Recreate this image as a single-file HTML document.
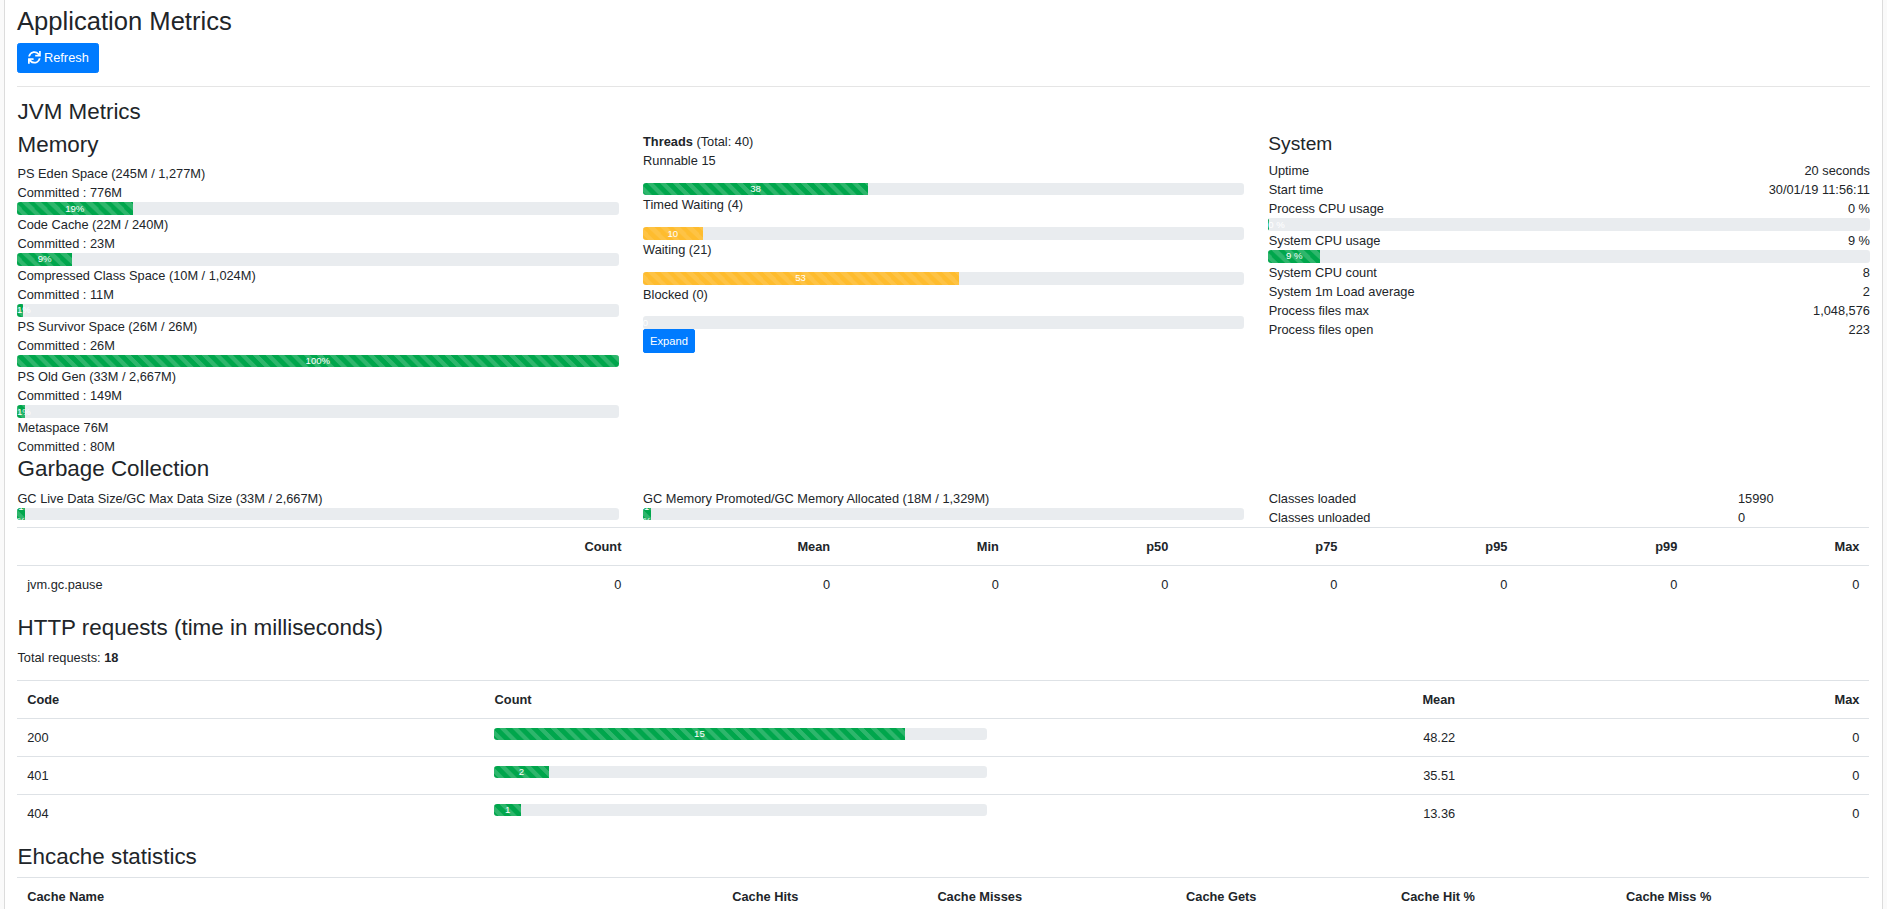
<!DOCTYPE html>
<html>
<head>
<meta charset="utf-8">
<style>
html,body{margin:0;padding:0;}
body{background:#fafafa;width:1887px;height:909px;overflow:hidden;position:relative;
  font-family:"Liberation Sans",sans-serif;color:#212529;}
.card{position:absolute;left:4px;top:-20px;width:1877px;height:1000px;background:#fff;border:1px solid #dcdcdc;}
.z{position:absolute;left:12px;top:24.8px;width:1853px;font-size:12.8px;line-height:19px;}
h2,h3,h4{margin:0 0 6.4px 0;font-weight:500;}
h3{text-indent:0.6px;}
h4,h2{text-indent:0;}
.z{text-indent:0.4px;}
th,td{text-indent:0.6px;}
.tr,.bar,.btn{text-indent:0;}
h2{font-size:25.6px;line-height:30px;}
h3{font-size:22.4px;line-height:26px;}
h4{font-size:19.2px;line-height:23px;}
p{margin:0 0 12.8px 0;}
hr{margin:12.8px 0;border:0;border-top:1px solid rgba(0,0,0,.1);box-sizing:content-box;height:0;}
.btn{display:inline-block;font-weight:400;text-align:center;white-space:nowrap;vertical-align:middle;
  border:0.8px solid #007bff;padding:4.5px 9.6px;font-size:12.8px;line-height:19px;border-radius:2.5px;
  color:#fff;background:#007bff;font-family:inherit;margin:0;}
.btn-sm{padding:3px 6.4px;font-size:11.2px;line-height:16px;border-radius:2px;}
.row{display:flex;flex-wrap:wrap;margin:0 -12px;}
.col4,.col9,.col3,.col8,.col12{padding:0 12px;box-sizing:border-box;}
.col4{flex:0 0 33.333333%;max-width:33.333333%;}
.col9{flex:0 0 75%;max-width:75%;}
.col3{flex:0 0 25%;max-width:25%;}
.col8{flex:0 0 66.666667%;max-width:66.666667%;}
.col12{flex:0 0 100%;max-width:100%;}
.tr{text-align:right;}
.progress{display:flex;height:12.8px;overflow:hidden;font-size:9.6px;line-height:14px;background:#e9ecef;border-radius:3.2px;}
.bar{display:flex;flex-direction:column;justify-content:center;color:#fff;text-align:center;white-space:nowrap;
  background-color:rgb(0,166,76);
  background-image:linear-gradient(45deg,rgba(255,255,255,.18) 25%,transparent 25%,transparent 50%,rgba(255,255,255,.18) 50%,rgba(255,255,255,.18) 75%,transparent 75%,transparent);
  background-size:12.8px 12.8px;background-position:4.8px 0;}
#thr .bar{background-position:3.6px 0;}
#sys .bar{background-position:3.8px 0;}
.warn{background-color:rgb(254,188,46);background-image:linear-gradient(45deg,rgba(255,255,255,.11) 25%,transparent 25%,transparent 50%,rgba(255,255,255,.11) 50%,rgba(255,255,255,.11) 75%,transparent 75%,transparent);}
#thr .warn{background-position:4.9px 0;}
.wrap{white-space:normal;}
td .progress{height:12px;}
.cat td{white-space:nowrap;overflow:hidden;}
table{width:1852px;border-collapse:collapse;margin-bottom:12.8px;table-layout:fixed;}
th,td{padding:9px 9.6px;vertical-align:top;border-top:1px solid #dee2e6;}
th{font-weight:700;text-align:left;}
thead th{vertical-align:bottom;border-bottom:1px solid #dee2e6;}
.fa{display:inline-block;width:12.8px;height:12.8px;vertical-align:-1.6px;overflow:visible;}
</style>
</head>
<body>
<div class="card">
<div class="z">
  <h2>Application Metrics</h2>
  <p style="padding-top:0.6px;text-indent:0"><button class="btn"><svg class="fa" viewBox="0 0 512 512"><path fill="#fff" d="M440.65 12.57l4 82.77A247.16 247.16 0 0 0 255.83 8C134.73 8 33.91 94.92 12.29 209.82A12 12 0 0 0 24.09 224h49.05a12 12 0 0 0 11.67-9.26 175.91 175.910 0 0 1 317-56.94l-101.46-4.86a12 12 0 0 0-12.57 12v47.41a12 12 0 0 0 12 12H500a12 12 0 0 0 12-12V12a12 12 0 0 0-12-12h-47.37a12 12 0 0 0-11.98 12.57zM255.83 432a175.61 175.61 0 0 1-146-77.8l101.8 4.87a12 12 0 0 0 12.57-12v-47.4a12 12 0 0 0-12-12H12a12 12 0 0 0-12 12V500a12 12 0 0 0 12 12h47.35a12 12 0 0 0 12-12.6l-4.15-82.57A247.17 247.17 0 0 0 255.83 504c121.11 0 221.93-86.92 243.55-201.82a12 12 0 0 0-11.8-14.18h-49.05a12 12 0 0 0-11.67 9.26A175.86 175.86 0 0 1 255.83 432z"/></svg>&nbsp;<span>Refresh</span></button></p>
  <hr>
  <h3>JVM Metrics</h3>
  <div class="row">
    <div class="col4" id="mem">
      <h3>Memory</h3>
      <div><span>PS Eden Space (245M / 1,277M)</span><div>Committed : 776M</div><div class="progress"><div class="bar" style="width:19.2%"><span>19%</span></div></div></div>
      <div><span>Code Cache (22M / 240M)</span><div>Committed : 23M</div><div class="progress"><div class="bar" style="width:9.2%"><span>9%</span></div></div></div>
      <div><span>Compressed Class Space (10M / 1,024M)</span><div>Committed : 11M</div><div class="progress"><div class="bar" style="width:1.0%"><span>1%</span></div></div></div>
      <div><span>PS Survivor Space (26M / 26M)</span><div>Committed : 26M</div><div class="progress"><div class="bar" style="width:100%"><span>100%</span></div></div></div>
      <div><span>PS Old Gen (33M / 2,667M)</span><div>Committed : 149M</div><div class="progress"><div class="bar" style="width:1.33%"><span>1%</span></div></div></div>
      <div><span>Metaspace 76M</span><div>Committed : 80M</div></div>
    </div>
    <div class="col4" id="thr">
      <b>Threads</b> (Total: 40) 
      <p><span>Runnable</span> 15</p>
      <div class="progress"><div class="bar" style="width:37.5%"><span>38</span></div></div>
      <p><span>Timed Waiting</span> (4)</p>
      <div class="progress"><div class="bar warn" style="width:10%"><span>10</span></div></div>
      <p><span>Waiting</span> (21)</p>
      <div class="progress"><div class="bar warn" style="width:52.5%"><span>53</span></div></div>
      <p><span>Blocked</span> (0)</p>
      <div class="progress"><div class="bar" style="width:0%"><span>0</span></div></div>
      <div style="text-indent:0"><button class="btn btn-sm">Expand</button></div>
    </div>
    <div class="col4" id="sys">
      <h4>System</h4>
      <div class="row"><div class="col4">Uptime</div><div class="col8 tr">20 seconds</div></div>
      <div class="row"><div class="col4">Start time</div><div class="col8 tr">30/01/19 11:56:11</div></div>
      <div class="row"><div class="col9">Process CPU usage</div><div class="col3 tr">0 %</div></div>
      <div class="progress"><div class="bar" style="width:0.17%"><span>0 %</span></div></div>
      <div class="row"><div class="col9">System CPU usage</div><div class="col3 tr">9 %</div></div>
      <div class="progress"><div class="bar" style="width:8.6%"><span>9 %</span></div></div>
      <div class="row"><div class="col9">System CPU count</div><div class="col3 tr">8</div></div>
      <div class="row"><div class="col9">System 1m Load average</div><div class="col3 tr">2</div></div>
      <div class="row"><div class="col9">Process files max</div><div class="col3 tr">1,048,576</div></div>
      <div class="row"><div class="col9">Process files open</div><div class="col3 tr">223</div></div>
    </div>
  </div>
  <div>
  <h3>Garbage Collection</h3>
  <div class="row">
    <div class="col4"><span>GC Live Data Size/GC Max Data Size (33M / 2,667M)</span>
      <div class="progress"><div class="bar" style="width:1.33%"><span>1<br>%</span></div></div></div>
    <div class="col4"><span>GC Memory Promoted/GC Memory Allocated (18M / 1,329M)</span>
      <div class="progress"><div class="bar" style="width:1.33%"><span>1<br>%</span></div></div></div>
    <div class="col4">
      <div class="row"><div class="col9">Classes loaded</div><div class="col3">15990</div></div>
      <div class="row"><div class="col9">Classes unloaded</div><div class="col3">0</div></div>
    </div>
  </div>
  <table class="gct">
    <colgroup><col style="width:421px"><col style="width:193px"><col style="width:208.7px"><col style="width:168.8px"><col style="width:169.4px"><col style="width:169.1px"><col style="width:170px"><col style="width:169.9px"><col></colgroup>
    <thead><tr><th></th><th class="tr">Count</th><th class="tr">Mean</th><th class="tr">Min</th><th class="tr">p50</th><th class="tr">p75</th><th class="tr">p95</th><th class="tr">p99</th><th class="tr">Max</th></tr></thead>
    <tbody><tr><td>jvm.gc.pause</td><td class="tr">0</td><td class="tr">0</td><td class="tr">0</td><td class="tr">0</td><td class="tr">0</td><td class="tr">0</td><td class="tr">0</td><td class="tr">0</td></tr></tbody>
  </table>
  </div>
  <div>
  <h3>HTTP requests (time in milliseconds)</h3>
  <p><span>Total requests:</span> <b>18</b></p>
  <table class="htt">
    <colgroup><col style="width:467.4px"><col style="width:512.2px"><col style="width:468.2px"><col></colgroup>
    <thead><tr><th>Code</th><th>Count</th><th class="tr">Mean</th><th class="tr">Max</th></tr></thead>
    <tbody>
      <tr><td>200</td><td><div class="progress"><div class="bar" style="width:83.33%"><span>15</span></div></div></td><td class="tr">48.22</td><td class="tr">0</td></tr>
      <tr><td>401</td><td><div class="progress"><div class="bar" style="width:11.11%"><span>2</span></div></div></td><td class="tr">35.51</td><td class="tr">0</td></tr>
      <tr><td>404</td><td><div class="progress"><div class="bar" style="width:5.56%"><span>1</span></div></div></td><td class="tr">13.36</td><td class="tr">0</td></tr>
    </tbody>
  </table>
  </div>
  <div>
  <h3>Ehcache statistics</h3>
  <table class="cat">
    <colgroup><col style="width:705px"><col style="width:205.2px"><col style="width:248.7px"><col style="width:214.9px"><col style="width:225.1px"><col></colgroup>
    <thead><tr><th>Cache Name</th><th>Cache Hits</th><th>Cache Misses</th><th>Cache Gets</th><th>Cache Hit %</th><th>Cache Miss %</th></tr></thead>
    <tbody>
      <tr><td>com.mycompany.myapp.repository.UserRepository.usersByLogin</td><td>0</td><td>0</td><td>0</td><td>0</td><td>0</td></tr>
      <tr><td>com.mycompany.myapp.repository.UserRepository.usersByEmail</td><td>0</td><td>0</td><td>0</td><td>0</td><td>0</td></tr>
    </tbody>
  </table>
  </div>
</div>
</div>
</body>
</html>
